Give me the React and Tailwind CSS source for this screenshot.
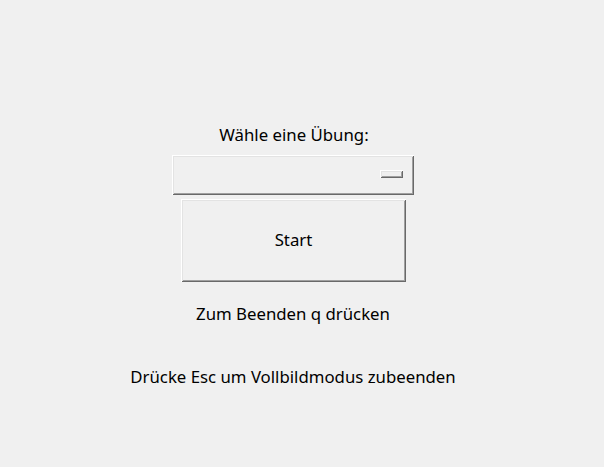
const RAISED =
  'shadow-[inset_1px_1px_0_#ffffff,inset_-1px_-1px_0_#696969,inset_2px_2px_0_#e3e3e3,inset_-2px_-2px_0_#a0a0a0]'

export default function App() {
  return (
    <div
      className="w-[604px] h-[467px] bg-[#f0f0f0] text-black flex flex-col items-center pr-[18px] pt-[125px]"
      style={{ fontFamily: '"Noto Sans", "Open Sans", sans-serif' }}
    >
      <p className="text-[16.8px] leading-[20px] ml-[2px]">Wähle eine Übung:</p>

      <div className={`mt-[10px] w-[242px] h-[40px] bg-[#f0f0f0] flex items-center justify-end pr-[11px] ${RAISED}`}>
        <div className="w-[23px] h-[8px] mt-[-2px] shadow-[inset_1px_1px_0_#ffffff,inset_-1px_-1px_0_#696969,inset_2px_2px_0_#e3e3e3,inset_-2px_-2px_0_#a0a0a0]" />
      </div>

      <button
        className={`mt-[4px] ml-[1px] w-[225px] h-[83px] bg-[#f0f0f0] flex items-center justify-center text-[16.8px] leading-[20px] pb-[2px] ${RAISED}`}
      >
        Start
      </button>

      <p className="mt-[22px] text-[16.8px] leading-[20px]">Zum Beenden q drücken</p>

      <p className="mt-[43px] text-[16.8px] leading-[20px]">Drücke Esc um Vollbildmodus zubeenden</p>
    </div>
  )
}
